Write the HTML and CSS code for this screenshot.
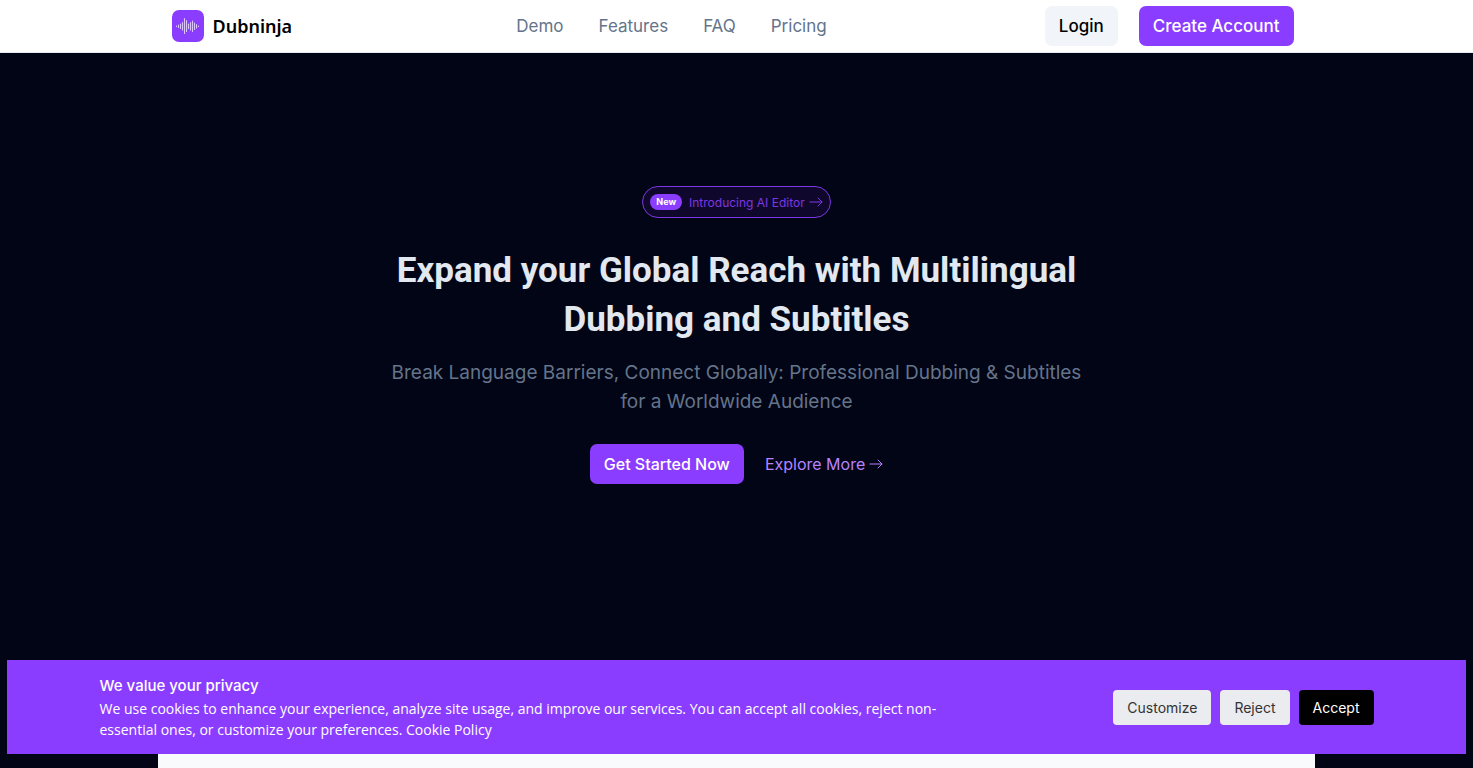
FILE: index.html
```html
<!DOCTYPE html>
<html lang="en">
  <head>
    <meta charset="UTF-8" />
    <meta name="viewport" content="width=device-width, initial-scale=1.0" />
    <title>Dubninja</title>
    <link rel="stylesheet" href="styles.css">
  </head>
  <body>
    <header class="header">
      <div class="header-inner">
        <a class="brand" href="#">
          <svg class="logo" viewBox="0 0 32 32" aria-hidden="true">
            <rect width="32" height="32" rx="7" fill="#8b3dff" />
            <path d="M4.500 16v.5M6.500 15v2.500M8.500 14v4.500M10.500 12.500v7.500M12.500 8.500v15M14.500 10.500v11M16.500 14v4.500M18.500 12.500v7.500M20.500 11v10.500M22.500 13v6.500M24.500 14.500v3.500M26.500 16v.5" stroke="#dcc4ff" stroke-width="1.100" stroke-linecap="round" fill="none" />
          </svg>
          <span>Dubninja</span>
        </a>
        <nav class="nav">
          <a href="#demo">Demo</a>
          <a href="#features">Features</a>
          <a href="#faq">FAQ</a>
          <a href="#pricing">Pricing</a>
        </nav>
        <div class="header-actions">
          <button class="btn btn-light" type="button">Login</button>
          <button class="btn btn-primary" type="button">Create Account</button>
        </div>
      </div>
    </header>

    <main class="main">
      <section class="hero">
        <a class="announcement" href="#editor">
          <span class="badge">New</span>
          <span>Introducing AI Editor</span>
          <svg class="arrow" viewBox="0 0 14 10" aria-hidden="true">
            <path d="M1 5h12M9 1l4 4-4 4" />
          </svg>
        </a>
        <h1>Expand your Global Reach with Multilingual Dubbing and Subtitles</h1>
        <p class="subtitle">Break Language Barriers, Connect Globally: Professional Dubbing &amp; Subtitles for a Worldwide Audience</p>
        <div class="hero-actions">
          <button class="btn btn-primary btn-hero" type="button">Get Started Now</button>
          <a class="explore" href="#demo">
            <span>Explore More</span>
            <svg class="arrow" viewBox="0 0 14 10" aria-hidden="true">
              <path d="M1 5h12M9 1l4 4-4 4" />
            </svg>
          </a>
        </div>
      </section>

      <section class="demo" id="demo"></section>
    </main>

    <!-- Cookie consent -->
    <aside class="cookie-banner" aria-label="Cookie consent">
      <div class="cookie-inner">
        <div class="cookie-text">
          <h2>We value your privacy</h2>
          <p>We use cookies to enhance your experience, analyze site usage, and improve our services. You can accept all cookies, reject non-essential ones, or customize your preferences. <a href="#cookies">Cookie Policy</a></p>
        </div>
        <div class="cookie-actions">
          <button type="button">Customize</button>
          <button type="button">Reject</button>
          <button class="accept" type="button">Accept</button>
        </div>
      </div>
    </aside>
  </body>
</html>
```
FILE: styles.css
```css
* {
  box-sizing: border-box;
}

body {
  margin: 0;
  min-height: 100vh;
  display: flex;
  flex-direction: column;
  font-family: Inter, "Liberation Sans", sans-serif;
  background: #020515;
}

h1,
h2,
p {
  margin: 0;
}

a {
  color: inherit;
  text-decoration: none;
}

button {
  font-family: inherit;
  border: none;
  cursor: pointer;
}

/* Header */
.header {
  background: #fff;
  border-bottom: 1px solid #e2e8f0;
}

.header-inner {
  display: flex;
  align-items: center;
  justify-content: space-between;
  max-width: 1130px;
  margin: 0 auto;
  padding: 6px 8px 6px 0;
}

.brand {
  display: flex;
  align-items: center;
  gap: 9px;
  color: #000;
  font-family: "Noto Sans", sans-serif;
  font-size: 18px;
  font-weight: 600;
}

.logo {
  width: 32px;
  height: 32px;
}

.nav {
  display: flex;
  gap: 35px;
  padding-left: 6px;
  color: #64748b;
  font-size: 17px;
}

.header-actions {
  display: flex;
  gap: 21px;
}

.btn {
  height: 40px;
  padding: 0 14px;
  border-radius: 7px;
  font-size: 17px;
  font-weight: 500;
}

.btn-light {
  background: #f1f5f9;
  color: #000;
}

.btn-primary {
  background: #8b3dff;
  color: #fff;
}

/* Hero */
.main {
  flex: 1;
  display: flex;
  flex-direction: column;
}

.hero {
  display: flex;
  flex-direction: column;
  align-items: center;
  padding: 133px 20px 216px;
  text-align: center;
}

.announcement {
  display: flex;
  align-items: center;
  height: 32px;
  padding: 0 7px;
  border: 1px solid #7c37e4;
  border-radius: 16px;
  background: #10082c;
  color: #7c37e4;
  font-size: 12px;
}

.badge {
  margin-right: 7px;
  padding: 0 6px;
  border-radius: 8px;
  background: #8b3dff;
  color: #fff;
  font-size: 9px;
  font-weight: 700;
  line-height: 16px;
}

.arrow {
  width: 14px;
  height: 10px;
  margin-left: 4px;
  fill: none;
  stroke: currentColor;
  stroke-linecap: round;
  stroke-linejoin: round;
}

.hero h1 {
  max-width: 720px;
  margin-top: 28px;
  color: #e2e8f0;
  font-family: Roboto, sans-serif;
  font-size: 35px;
  font-weight: 700;
  line-height: 49px;
}

.subtitle {
  max-width: 720px;
  margin-top: 14px;
  color: #64748b;
  font-size: 19px;
  line-height: 29px;
}

.hero-actions {
  display: flex;
  align-items: center;
  gap: 21px;
  margin-top: 28px;
}

.btn-hero {
  font-size: 16px;
}

.explore {
  display: flex;
  align-items: center;
  color: #b683ff;
  font-size: 16px;
}

.demo {
  flex: 1;
  width: 100%;
  max-width: 1157px;
  margin: 0 auto;
  background: #f8fafc;
}

/* Cookie banner */
.cookie-banner {
  position: fixed;
  right: 7px;
  bottom: 14px;
  left: 7px;
  padding: 14px;
  background: #8b3dff;
  color: #fff;
}

.cookie-inner {
  display: flex;
  align-items: center;
  justify-content: space-between;
  max-width: 1274px;
  margin: 0 auto;
}

.cookie-text {
  max-width: 850px;
}

.cookie-text h2 {
  font-size: 15px;
  font-weight: 500;
  line-height: 24px;
}

.cookie-text p {
  font-family: "Open Sans", sans-serif;
  font-size: 14px;
  line-height: 21px;
}

.cookie-actions {
  display: flex;
  gap: 9px;
}

.cookie-actions button {
  height: 35px;
  padding: 0 14px;
  border-radius: 4px;
  background: #eaecef;
  color: #333;
  font-size: 14px;
}

.cookie-actions .accept {
  background: #000;
  color: #fff;
}
```
